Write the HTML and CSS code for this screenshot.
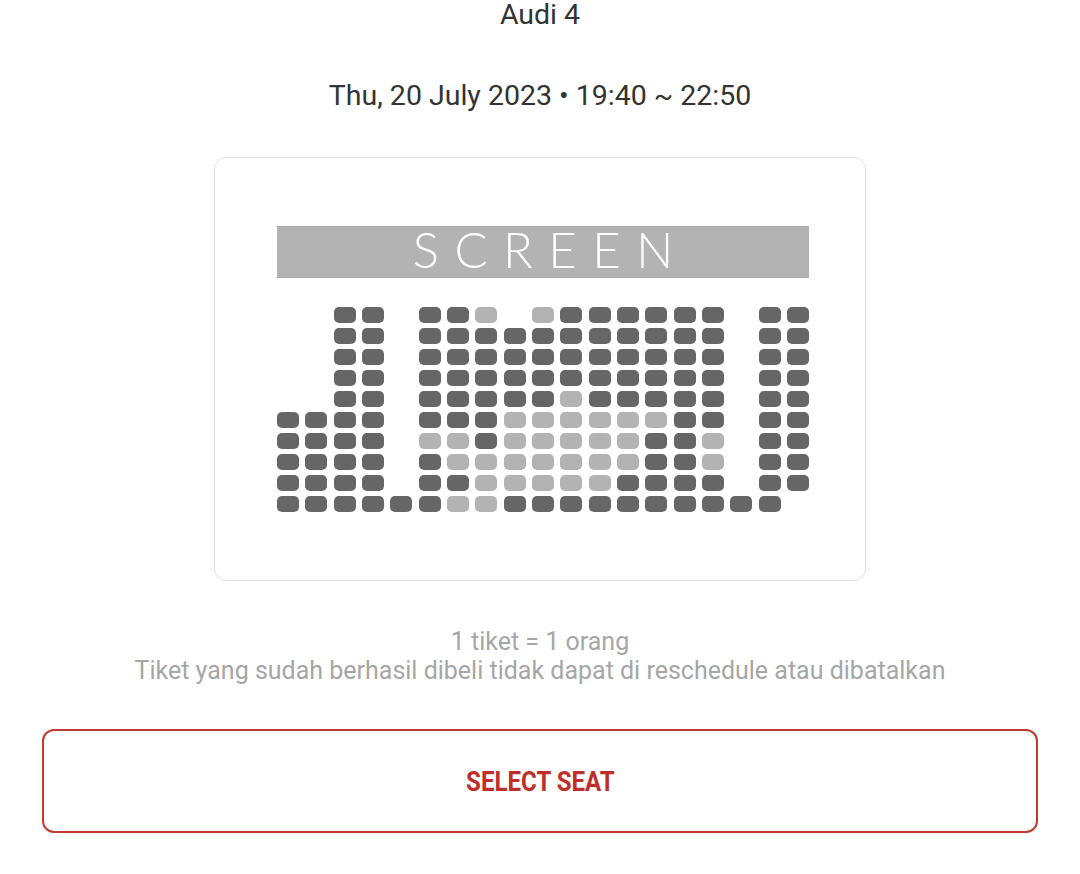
FILE: index.html
```html
<!DOCTYPE html>
<html lang="id">
<head>
<meta charset="utf-8">
<title>Select Seat</title>
<link rel="stylesheet" href="styles.css">
</head>
<body>
<main class="page">
  <h1 class="audi">Audi 4</h1>
  <p class="schedule">Thu, 20 July 2023 • 19:40 ~ 22:50</p>
  <section class="card">
    <div class="screen">SCREEN</div>
    <div class="seats" id="seats"></div>
  </section>
  <div class="notes">
    <p>1 tiket = 1 orang</p>
    <p>Tiket yang sudah berhasil dibeli tidak dapat di reschedule atau dibatalkan</p>
  </div>
  <button class="select-btn"><span>SELECT SEAT</span></button>
</main>
<script src="app.js"></script>
</body>
</html>
```
FILE: styles.css
```css
* { box-sizing: border-box; }
html, body { margin: 0; padding: 0; background: #ffffff; }
body { font-family: Roboto, "Noto Sans", Arial, sans-serif; color: #333333; }
.page { display: flex; flex-direction: column; align-items: center; }
.audi { margin: 0; font-weight: 400; font-size: 28.5px; line-height: 30px; color: #333; }
.schedule { margin: 51px 0 0; font-size: 28.5px; line-height: 30px; color: #333; }
.card {
  margin-top: 46px;
  width: 652px;
  height: 424px;
  border: 1px solid #e2e2e2;
  border-radius: 12px;
  padding: 68px 56px 0 62px;
  display: flex;
  flex-direction: column;
}
.screen {
  height: 52px;
  background: #b3b3b3;
  border-top: 1px solid #a8a8a8;
  border-bottom: 1px solid #a8a8a8;
  color: #ffffff;
  font-family: Lato, "Open Sans", sans-serif;
  font-weight: 300;
  font-size: 49px;
  line-height: 44px;
  letter-spacing: 15.5px;
  text-indent: 15.5px;
  text-align: center;
}
.seats {
  margin-top: 29px;
  display: grid;
  grid-template-columns: repeat(19, 22px);
  grid-auto-rows: 16px;
  justify-content: space-between;
  row-gap: 5px;
}
.seat { border-radius: 5px; background: #666666; }
.seat.taken { background: #b3b3b3; }
.seat.empty { background: transparent; }
.notes { margin-top: 46px; text-align: center; color: #a6a6a6; font-size: 25px; line-height: 29px; }
.notes p { margin: 0; }
.select-btn {
  margin-top: 44px;
  width: 996px;
  height: 104px;
  background: #ffffff;
  border: 2px solid #bf3a30;
  border-radius: 12px;
  color: #bf2f2a;
  font-family: Roboto, Arial, sans-serif;
  font-weight: 700;
  font-size: 28px;
  cursor: pointer;
}
.select-btn span { display: inline-block; transform: scaleX(0.86); }
```
FILE: app.js
```js
const rows = [
  "..XX.XXL.LXXXXXX.XX",
  "..XX.XXXXXXXXXXX.XX",
  "..XX.XXXXXXXXXXX.XX",
  "..XX.XXXXXXXXXXX.XX",
  "..XX.XXXXXLXXXXX.XX",
  "XXXX.XXXLLLLLLXX.XX",
  "XXXX.LLXLLLLLXXL.XX",
  "XXXX.XLLLLLLLXXL.XX",
  "XXXX.XXLLLLLXXXX.XX",
  "XXXXXXLLXXXXXXXXXX."
];
const wrap = document.getElementById("seats");
rows.forEach(r => {
  for (const c of r) {
    const d = document.createElement("div");
    d.className = "seat" + (c === "L" ? " taken" : c === "." ? " empty" : "");
    wrap.appendChild(d);
  }
});
```
